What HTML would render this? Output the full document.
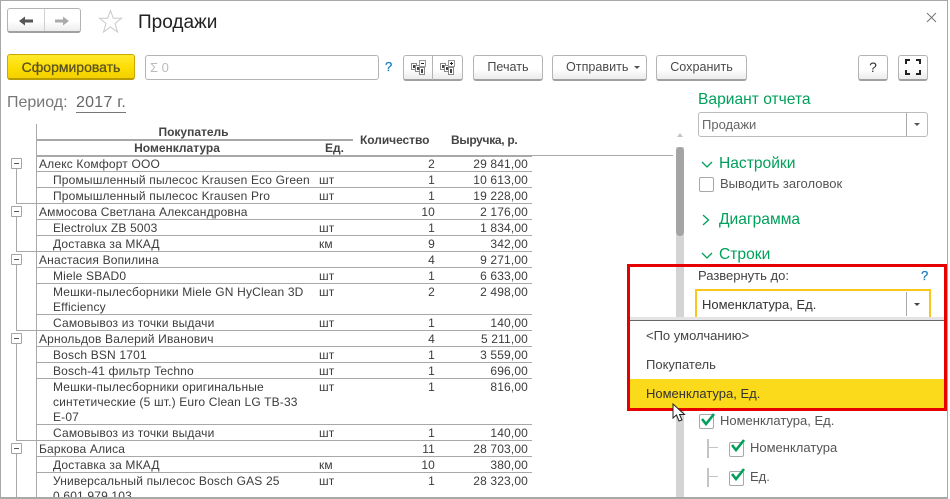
<!DOCTYPE html>
<html lang="ru"><head><meta charset="utf-8"><title>Продажи</title>
<style>
html,body{margin:0;padding:0;background:#fff}
#p{position:relative;width:950px;height:499px;overflow:hidden;background:#fff;font:12px/16px "Liberation Sans",Arial,sans-serif;color:#3c3c3c}
#p div,#p span.a,#p svg{position:absolute}
.t{position:absolute;white-space:nowrap;line-height:16px;letter-spacing:.17px}
.r{position:absolute;white-space:nowrap;line-height:16px;text-align:right;letter-spacing:.15px}
.q{font-size:13px;letter-spacing:0}
.n{font-weight:700;color:#444;letter-spacing:0}
.h{height:1px;background:#a8a8a8;left:36px;width:496px}
.b{box-sizing:border-box;border:1px solid #b4b4b4;border-bottom:2px solid #a0a0a0;border-radius:3px;background:linear-gradient(#fff,#fff 55%,#ececec);text-align:center;line-height:23px;color:#4a4a4a;font-size:12.6px}
.g{color:#00a05a;font-size:15.6px;white-space:nowrap;position:absolute;line-height:18px}
.m{box-sizing:border-box;width:11px;height:11px;border:1px solid #a4a4a4;border-radius:1px;background:#fff;left:11px}
.m:after{content:"";position:absolute;left:2px;top:4px;width:5px;height:1px;background:#555}
.cb{box-sizing:border-box;width:15px;height:15px;border:1px solid #a8a8a8;border-radius:2px;background:#fff}
</style></head><body><div id="p">

<!-- window frame -->
<div style="left:0;top:0;width:950px;height:1px;background:#a8a8a8"></div>
<div style="left:0;top:0;width:1px;height:499px;background:#a8a8a8"></div>
<div style="left:947px;top:0;width:3px;height:499px;background:#fff;border-left:1px solid #a8a8a8;box-sizing:border-box"></div>
<div style="left:0;top:497px;width:948px;height:2px;background:#a8a8a8"></div>

<!-- nav -->
<div class="b" style="left:7px;top:8px;width:74px;height:25px"></div>
<div style="left:44px;top:9px;width:1px;height:22px;background:#d0d0d0"></div>
<svg style="left:19px;top:15px" width="15" height="12" viewBox="0 0 15 12"><path d="M0 6 6 1.500V4.500H14V7.500H6V10.500Z" fill="#555"/></svg>
<svg style="left:55px;top:15px" width="15" height="12" viewBox="0 0 15 12"><path d="M14 6 8 1.500V4.500H0V7.500H8V10.500Z" fill="#aaa"/></svg>
<svg style="left:98px;top:9px" width="25" height="25" viewBox="0 0 25 25"><path d="M12.500 1.500 15.300 9.300H23.500L17 14.500 19.500 23 12.500 18 5.500 23 8 14.500 1.500 9.300H9.700Z" fill="#fff" stroke="#c8c8c8" stroke-width="1"/></svg>
<span class="t" style="left:138px;top:13px;font-size:19px;line-height:20px;color:#222;letter-spacing:0">Продажи</span>
<svg style="left:926px;top:12px" width="11" height="11" viewBox="0 0 11 11"><path d="M1 1 10 10M10 1 1 10" stroke="#777" stroke-width="1" fill="none"/></svg>

<!-- toolbar -->
<div style="box-sizing:border-box;left:7px;top:54px;width:128px;height:26px;border:1px solid #c9a900;border-bottom:2px solid #b89c00;border-radius:3px;background:linear-gradient(#ffe92e,#fbdc00 60%,#f4d000);text-align:center;line-height:24px;color:#5c5320;font-size:14px;-webkit-text-stroke:.3px #5c5320">Сформировать</div>
<div style="box-sizing:border-box;left:145px;top:55px;width:234px;height:25px;border:1px solid #b4b4b4;border-radius:3px;background:#fff;padding-left:4px;line-height:23px;color:#bbb;font-size:13px">Σ 0</div>
<span class="t" style="left:385px;top:59px;color:#1c80c4;font-size:13px;letter-spacing:0;-webkit-text-stroke:.3px #1c80c4">?</span>
<div class="b" style="left:403px;top:55px;width:60px;height:26px"></div>
<div style="left:432px;top:55px;width:1px;height:25px;background:#b4b4b4"></div>
<svg style="left:410px;top:59px" width="17" height="17" viewBox="0 0 17 17"><rect x="1.500" y="4.500" width="5" height="6" fill="#fff" stroke="#888"/><path d="M3 6H5V9H3Z" fill="#444"/><rect x="5.500" y="6.500" width="5" height="6" fill="#fff" stroke="#888"/><path d="M7 8H9V11H7Z" fill="#444"/><rect x="9.500" y="8.500" width="5" height="7" fill="#fff" stroke="#888"/><path d="M11 10H13V14H11Z" fill="#444"/><rect x="9.500" y="1.500" width="6" height="6" fill="#fff" stroke="#999"/><path d="M11 4.500H14" stroke="#222"/></svg>
<svg style="left:439px;top:59px" width="17" height="17" viewBox="0 0 17 17"><rect x="1.500" y="4.500" width="5" height="6" fill="#fff" stroke="#888"/><path d="M3 6H5V9H3Z" fill="#444"/><rect x="5.500" y="6.500" width="5" height="6" fill="#fff" stroke="#888"/><path d="M7 8H9V11H7Z" fill="#444"/><rect x="9.500" y="8.500" width="5" height="7" fill="#fff" stroke="#888"/><path d="M11 10H13V14H11Z" fill="#444"/><rect x="9.500" y="1.500" width="6" height="6" fill="#fff" stroke="#999"/><path d="M11 4.500H14M12.500 3V6" stroke="#222"/></svg>
<div class="b" style="left:473px;top:55px;width:70px;height:26px">Печать</div>
<div class="b" style="left:552px;top:55px;width:95px;height:26px;text-align:left;padding-left:13px">Отправить</div>
<svg style="left:634px;top:66px" width="7" height="4"><path d="M0 0H6L3 3Z" fill="#555"/></svg>
<div class="b" style="left:656px;top:55px;width:91px;height:26px">Сохранить</div>
<div class="b" style="left:858px;top:55px;width:30px;height:26px;font-size:14px;color:#333">?</div>
<div class="b" style="left:898px;top:55px;width:30px;height:26px"></div>
<svg style="left:905px;top:59px" width="16" height="16" viewBox="0 0 16 16"><path d="M1 5V1H5M11 1H15V5M15 11V15H11M5 15H1V11" fill="none" stroke="#222" stroke-width="2"/></svg>

<!-- period -->
<span class="t" style="left:7px;top:94px;font-size:16px;line-height:18px;color:#777;letter-spacing:0">Период:</span>
<span class="t" style="left:76px;top:94px;font-size:16px;line-height:18px;color:#666;border-bottom:1px solid #777;letter-spacing:.25px">2017 г.</span>

<!-- table header -->
<div style="left:36px;top:124px;width:1px;height:375px;background:#a8a8a8"></div>
<div style="left:37px;top:139px;width:316px;height:2px;background:#a8a8a8"></div>
<div style="left:36px;top:155px;width:496px;height:2px;background:#a8a8a8"></div>
<div style="left:532px;top:155px;width:141px;height:1px;background:#a8a8a8"></div>
<span class="t n" style="left:37px;top:124px;width:313px;text-align:center">Покупатель</span>
<span class="t n" style="left:37px;top:140px;width:280px;text-align:center">Номенклатура</span>
<span class="t n" style="left:325px;top:140px">Ед.</span>
<span class="t n" style="left:360px;top:132px;letter-spacing:-.05px">Количество</span>
<span class="t n" style="left:451px;top:132px;letter-spacing:-.3px">Выручка, р.</span>

<!-- row lines -->
<div class="h" style="top:171px"></div><div class="h" style="top:187px"></div><div class="h" style="top:203px;left:16px;width:516px"></div><div class="h" style="top:219px"></div><div class="h" style="top:235px"></div><div class="h" style="top:251px;left:16px;width:516px"></div><div class="h" style="top:267px"></div><div class="h" style="top:283px"></div><div class="h" style="top:314px"></div><div class="h" style="top:330px;left:16px;width:516px"></div><div class="h" style="top:346px"></div><div class="h" style="top:362px"></div><div class="h" style="top:378px"></div><div class="h" style="top:424px"></div><div class="h" style="top:440px;left:16px;width:516px"></div><div class="h" style="top:456px"></div><div class="h" style="top:472px"></div>
<!-- tree lines -->
<div style="left:16px;top:168px;width:1px;height:35px;background:#a8a8a8"></div>
<div style="left:16px;top:216px;width:1px;height:35px;background:#a8a8a8"></div>
<div style="left:16px;top:264px;width:1px;height:66px;background:#a8a8a8"></div>
<div style="left:16px;top:343px;width:1px;height:97px;background:#a8a8a8"></div>
<div style="left:16px;top:453px;width:1px;height:46px;background:#a8a8a8"></div>
<div class="m" style="top:158px"></div><div class="m" style="top:206px"></div><div class="m" style="top:254px"></div><div class="m" style="top:333px"></div><div class="m" style="top:443px"></div>

<!-- rows -->
<span class="t" style="left:39px;top:156px">Алекс Комфорт ООО</span><span class="r" style="left:395px;top:156px;width:40px">2</span><span class="r" style="left:450px;top:156px;width:78px">29 841,00</span>
<span class="t" style="left:53px;top:172px">Промышленный пылесос Krausen Eco Green</span><span class="t" style="left:319px;top:172px">шт</span><span class="r" style="left:395px;top:172px;width:40px">1</span><span class="r" style="left:450px;top:172px;width:78px">10 613,00</span>
<span class="t" style="left:53px;top:188px">Промышленный пылесос Krausen Pro</span><span class="t" style="left:319px;top:188px">шт</span><span class="r" style="left:395px;top:188px;width:40px">1</span><span class="r" style="left:450px;top:188px;width:78px">19 228,00</span>
<span class="t" style="left:39px;top:204px">Аммосова Светлана Александровна</span><span class="r" style="left:395px;top:204px;width:40px">10</span><span class="r" style="left:450px;top:204px;width:78px">2 176,00</span>
<span class="t" style="left:53px;top:220px">Electrolux ZB 5003</span><span class="t" style="left:319px;top:220px">шт</span><span class="r" style="left:395px;top:220px;width:40px">1</span><span class="r" style="left:450px;top:220px;width:78px">1 834,00</span>
<span class="t" style="left:53px;top:236px">Доставка за МКАД</span><span class="t" style="left:319px;top:236px">км</span><span class="r" style="left:395px;top:236px;width:40px">9</span><span class="r" style="left:450px;top:236px;width:78px">342,00</span>
<span class="t" style="left:39px;top:252px">Анастасия Вопилина</span><span class="r" style="left:395px;top:252px;width:40px">4</span><span class="r" style="left:450px;top:252px;width:78px">9 271,00</span>
<span class="t" style="left:53px;top:268px">Miele SBAD0</span><span class="t" style="left:319px;top:268px">шт</span><span class="r" style="left:395px;top:268px;width:40px">1</span><span class="r" style="left:450px;top:268px;width:78px">6 633,00</span>
<span class="t" style="left:53px;top:284px">Мешки-пылесборники Miele GN HyClean 3D</span><span class="t" style="left:53px;top:299px">Efficiency</span><span class="t" style="left:319px;top:284px">шт</span><span class="r" style="left:395px;top:284px;width:40px">2</span><span class="r" style="left:450px;top:284px;width:78px">2 498,00</span>
<span class="t" style="left:53px;top:315px">Самовывоз из точки выдачи</span><span class="t" style="left:319px;top:315px">шт</span><span class="r" style="left:395px;top:315px;width:40px">1</span><span class="r" style="left:450px;top:315px;width:78px">140,00</span>
<span class="t" style="left:39px;top:331px">Арнольдов Валерий Иванович</span><span class="r" style="left:395px;top:331px;width:40px">4</span><span class="r" style="left:450px;top:331px;width:78px">5 211,00</span>
<span class="t" style="left:53px;top:347px">Bosch BSN 1701</span><span class="t" style="left:319px;top:347px">шт</span><span class="r" style="left:395px;top:347px;width:40px">1</span><span class="r" style="left:450px;top:347px;width:78px">3 559,00</span>
<span class="t" style="left:53px;top:363px">Bosch-41 фильтр Techno</span><span class="t" style="left:319px;top:363px">шт</span><span class="r" style="left:395px;top:363px;width:40px">1</span><span class="r" style="left:450px;top:363px;width:78px">696,00</span>
<span class="t" style="left:53px;top:379px">Мешки-пылесборники оригинальные</span><span class="t" style="left:53px;top:394px">синтетические (5 шт.) Euro Clean LG TB-33</span><span class="t" style="left:53px;top:409px">E-07</span><span class="t" style="left:319px;top:379px">шт</span><span class="r" style="left:395px;top:379px;width:40px">1</span><span class="r" style="left:450px;top:379px;width:78px">816,00</span>
<span class="t" style="left:53px;top:425px">Самовывоз из точки выдачи</span><span class="t" style="left:319px;top:425px">шт</span><span class="r" style="left:395px;top:425px;width:40px">1</span><span class="r" style="left:450px;top:425px;width:78px">140,00</span>
<span class="t" style="left:39px;top:441px">Баркова Алиса</span><span class="r" style="left:395px;top:441px;width:40px">11</span><span class="r" style="left:450px;top:441px;width:78px">28 703,00</span>
<span class="t" style="left:53px;top:457px">Доставка за МКАД</span><span class="t" style="left:319px;top:457px">км</span><span class="r" style="left:395px;top:457px;width:40px">10</span><span class="r" style="left:450px;top:457px;width:78px">380,00</span>
<span class="t" style="left:53px;top:473px">Универсальный пылесос Bosch GAS 25</span><span class="t" style="left:53px;top:488px">0 601 979 103</span><span class="t" style="left:319px;top:473px">шт</span><span class="r" style="left:395px;top:473px;width:40px">1</span><span class="r" style="left:450px;top:473px;width:78px">28 323,00</span>
<div style="left:1px;top:497px;width:946px;height:2px;background:#a8a8a8"></div>

<!-- scrollbar -->
<svg style="left:676px;top:132px" width="8" height="6"><path d="M4 1 7 5H1Z" fill="#c4c4c4"/></svg>
<div style="left:676px;top:147px;width:8px;height:352px;background:#d4d4d4"></div>
<div style="left:676px;top:147px;width:8px;height:89px;background:#a4a4a4;border-radius:4px"></div>
<div style="left:676px;top:497px;width:8px;height:2px;background:#a8a8a8"></div>

<!-- right panel -->
<span class="g" style="left:698px;top:91px">Вариант отчета</span>
<div style="box-sizing:border-box;left:698px;top:112px;width:230px;height:25px;border:1px solid #bbb;border-radius:3px;padding-left:3px;line-height:23px;color:#666;font-size:13px">Продажи</div>
<div style="left:906px;top:113px;width:1px;height:23px;background:#aaa"></div>
<svg style="left:914px;top:123px" width="7" height="4"><path d="M0 0H6L3 3Z" fill="#555"/></svg>

<svg style="left:701px;top:161px" width="12" height="8"><path d="M1 1 6 6 11 1" fill="none" stroke="#00a05a" stroke-width="1.300"/></svg>
<span class="g" style="left:719px;top:155px">Настройки</span>
<div class="cb" style="left:699px;top:177px"></div>
<span class="t q" style="left:720px;top:176px;color:#555">Выводить заголовок</span>
<svg style="left:702px;top:214px" width="8" height="12"><path d="M1 1 6.500 6 1 11" fill="none" stroke="#00a05a" stroke-width="1.300"/></svg>
<span class="g" style="left:719px;top:211px">Диаграмма</span>
<svg style="left:701px;top:252px" width="12" height="8"><path d="M1 1 6 6 11 1" fill="none" stroke="#00a05a" stroke-width="1.300"/></svg>
<span class="g" style="left:719px;top:246px">Строки</span>

<span class="t q" style="left:698px;top:268px;color:#444">Развернуть до:</span>
<span class="t" style="left:921px;top:268px;color:#1c80c4;font-size:13px;letter-spacing:0;-webkit-text-stroke:.3px #1c80c4">?</span>
<div style="box-sizing:border-box;left:695px;top:289px;width:236px;height:30px;border:2px solid #fbc61a;border-bottom:0;padding-left:5px;line-height:27px;color:#333;font-size:13px">Номенклатура, Ед.</div>
<div style="left:906px;top:292px;width:1px;height:24px;background:#aaa"></div>
<svg style="left:914px;top:303px" width="7" height="4"><path d="M0 0H6L3 3Z" fill="#444"/></svg>

<!-- dropdown -->
<div style="left:630px;top:317px;width:315px;height:3px;background:#e4e4e4"></div>
<div style="left:630px;top:320px;width:315px;height:1px;background:#666"></div>
<div style="left:630px;top:321px;width:315px;height:88px;background:#fff"></div>
<div style="left:630px;top:379px;width:315px;height:29px;background:#fbd91b"></div>
<span class="t q" style="left:646px;top:328px;color:#444">&lt;По умолчанию&gt;</span>
<span class="t q" style="left:646px;top:357px;color:#444">Покупатель</span>
<span class="t q" style="left:646px;top:386px;color:#333">Номенклатура, Ед.</span>
<div style="box-sizing:border-box;left:627px;top:264px;width:320px;height:147px;border:3px solid #e60000"></div>

<!-- below dropdown -->
<div class="cb" style="left:699px;top:414px"></div>
<svg style="left:700px;top:412px" width="16" height="15" viewBox="0 0 16 15"><path d="M2 7 6 12 14 2" fill="none" stroke="#00a05a" stroke-width="2.600"/></svg>
<span class="t q" style="left:720px;top:413px;color:#555">Номенклатура, Ед.</span>
<div style="left:707px;top:439px;width:2px;height:19px;background:#c4c4c4"></div>
<div style="left:707px;top:447px;width:11px;height:1px;background:#c4c4c4"></div>
<div class="cb" style="left:729px;top:442px"></div>
<svg style="left:730px;top:438px" width="16" height="15" viewBox="0 0 16 15"><path d="M2 7 6 12 14 2" fill="none" stroke="#00a05a" stroke-width="2.600"/></svg>
<span class="t q" style="left:750px;top:440px;color:#555">Номенклатура</span>
<div style="left:707px;top:468px;width:2px;height:19px;background:#c4c4c4"></div>
<div style="left:707px;top:476px;width:11px;height:1px;background:#c4c4c4"></div>
<div class="cb" style="left:729px;top:471px"></div>
<svg style="left:730px;top:467px" width="16" height="15" viewBox="0 0 16 15"><path d="M2 7 6 12 14 2" fill="none" stroke="#00a05a" stroke-width="2.600"/></svg>
<span class="t q" style="left:750px;top:469px;color:#555">Ед.</span>

<!-- cursor -->
<svg style="left:672px;top:403px" width="14" height="20" viewBox="0 0 14 20"><path d="M1 1V15L4.500 12 7 18 10 17 7.500 11.500H12.500Z" fill="#fff" stroke="#222" stroke-width="1"/></svg>
</div></body></html>
